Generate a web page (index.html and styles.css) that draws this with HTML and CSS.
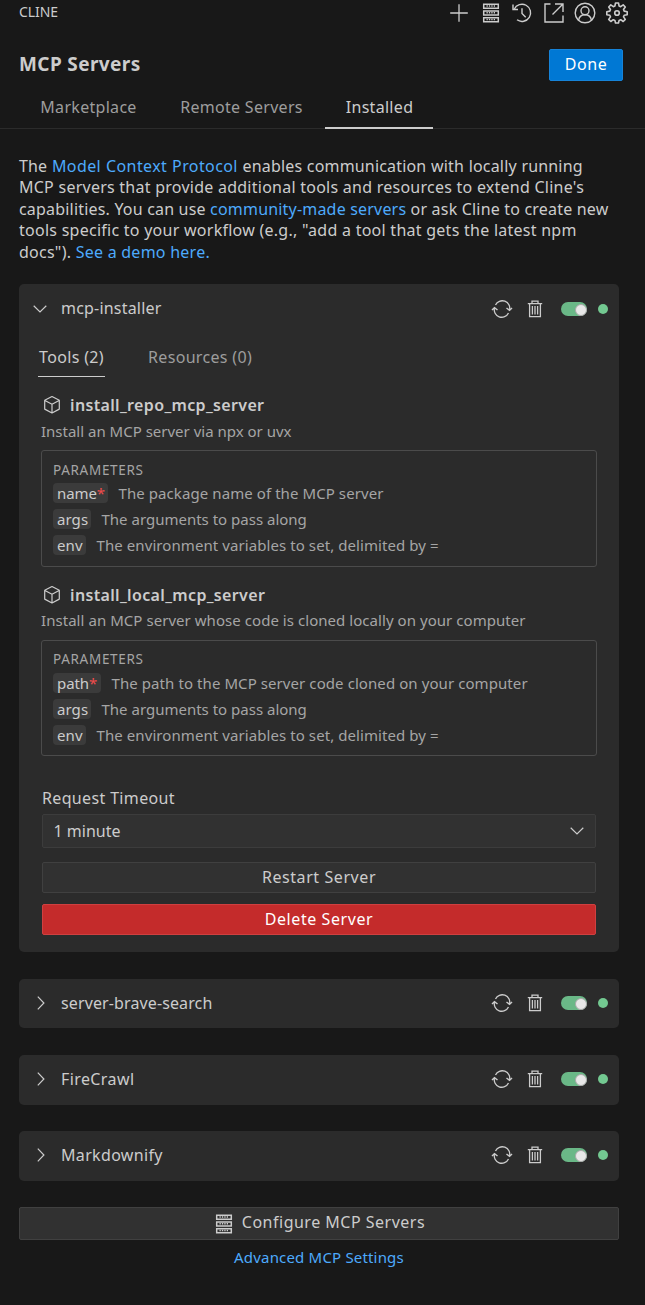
FILE: index.html
```html
<!DOCTYPE html>
<html lang="en">
<head>
<meta charset="utf-8">
<title>Cline - MCP Servers</title>
<link rel="stylesheet" href="styles.css">
</head>
<body>
<svg class="defs" width="0" height="0" aria-hidden="true">
  <symbol id="server" viewBox="0 0 18 20"><path d="M1.7 1.2h14.6v4H1.7zM1.7 8h14.6v4H1.7zM1.7 14.800h14.6v4H1.7z" fill="none" stroke="currentColor" stroke-width="1.5"/><path d="M4.500 2.9h9M4.500 9.700h9M4.500 16.500h9" stroke="currentColor" stroke-width="1.5" stroke-dasharray="1.3 1.1"/></symbol>
  <symbol id="refresh" viewBox="0 0 22 18"><g fill="none" stroke="currentColor" stroke-width="1.3"><path d="M4.5 5A7.5 7.5 0 0 1 18.5 10.2M17.5 13A7.5 7.5 0 0 1 3.5 7.8"/><path d="M1 10l2.5-2.3 3 2.3M15.5 8l3 2.3L21 8" stroke-width="1.5"/></g></symbol>
  <symbol id="trash" viewBox="0 0 16 18"><path d="M.8 3.7h14.4M5 3.5V1.2h6v2.3M2.6 3.7v13h10.8v-13M5.4 6v8.5M8 6v8.5M10.6 6v8.5" fill="none" stroke="currentColor" stroke-width="1.3"/></symbol>
  <symbol id="cube" viewBox="0 0 18 20"><path d="M9 1.5l7.3 3.8v8.8L9 18l-7.3-3.9V5.3zM1.9 5.5L9 9.3l7.1-3.8M9 9.3v8.5" fill="none" stroke="currentColor" stroke-width="1.2" stroke-linejoin="round"/></symbol>
  <symbol id="down" viewBox="0 0 14 8"><path d="M.7.8L7 6.9 13.3.8" fill="none" stroke="currentColor" stroke-width="1.2"/></symbol>
  <symbol id="right" viewBox="0 0 8 14"><path d="M.8.7L6.9 7 .8 13.3" fill="none" stroke="currentColor" stroke-width="1.2"/></symbol>
</svg>
<header class="topbar">
  <span class="brand">CLINE</span>
  <nav class="actions">
    <svg viewBox="0 0 22 22"><path d="M11 2.2v17.6M2.2 11h17.6" fill="none" stroke="currentColor" stroke-width="1.3"/></svg>
    <svg class="rack"><use href="#server"/></svg>
    <svg viewBox="0 0 22 22"><g fill="none" stroke="currentColor" stroke-width="1.4"><path d="M3.2 7.2A8.6 8.6 0 1 1 6 17.8"/><path d="M2 2.5v5h5M11 6.2v5.3l3.7 3.7"/></g></svg>
    <svg viewBox="0 0 22 22"><path d="M7.5 2H2v18h18v-6.5M12 2h8v8M20 2L9.5 12.5" fill="none" stroke="currentColor" stroke-width="1.4"/></svg>
    <svg viewBox="0 0 22 22"><g fill="none" stroke="currentColor" stroke-width="1.4"><circle cx="11" cy="11" r="9.8"/><circle cx="11" cy="8.8" r="4"/><path d="M4.6 18.2c.6-3.4 3-5.4 6.4-5.4s5.8 2 6.4 5.4"/></g></svg>
    <svg viewBox="0 0 22 22"><g fill="none" stroke="currentColor" stroke-width="1.6" stroke-linejoin="round"><path d="M9.5 1h3l.6 3 1.6.7 2.5-1.8 2.1 2.1-1.8 2.5.7 1.6 3 .6v3l-3 .6-.7 1.6 1.8 2.5-2.1 2.1-2.5-1.8-1.6.7-.6 2.6h-3l-.6-2.6-1.6-.7-2.5 1.8-2.1-2.1 1.8-2.5-.7-1.6-3-.6v-3l3-.6.7-1.600L2.700 5l2.100-2.100 2.500 1.800L8.900 4z"/><circle cx="11" cy="11" r="2.3"/></g></svg>
  </nav>
</header>
<div class="titlebar"><h1>MCP Servers</h1><button class="done">Done</button></div>
<nav class="tabs"><span class="tab market">Marketplace</span><span class="tab remote">Remote Servers</span><span class="tab active">Installed</span></nav>
<main>
  <p class="intro">
    <span class="l1">The <a>Model Context Protocol</a> enables communication with locally running</span>
    <span class="l2">MCP servers that provide additional tools and resources to extend Cline's</span>
    <span class="l3">capabilities. You can use <a>community-made servers</a> or ask Cline to create new</span>
    <span class="l4">tools specific to your workflow (e.g., "add a tool that gets the latest npm</span>
    <span class="l5">docs"). <a>See a demo here.</a></span>
  </p>
  <section class="card open">
    <div class="row"><span class="chev"><svg class="down"><use href="#down"/></svg></span><span class="name installer">mcp-installer</span><svg class="refresh"><use href="#refresh"/></svg><svg class="trash"><use href="#trash"/></svg><span class="toggle"></span><span class="dot"></span></div>
    <div class="subtabs"><span class="sub on">Tools (2)</span><span class="sub">Resources (0)</span></div>
    <article class="tool">
      <h2><svg class="cube"><use href="#cube"/></svg><span>install_repo_mcp_server</span></h2>
      <p class="desc">Install an MCP server via npx or uvx</p>
      <div class="params"><h3>PARAMETERS</h3>
        <div class="param"><code class="w55">name<i>*</i></code><span>The package name of the MCP server</span></div>
        <div class="param"><code class="w38">args</code><span class="plain">The arguments to pass along</span></div>
        <div class="param"><code class="w33">env</code><span>The environment variables to set, delimited by =</span></div>
      </div>
    </article>
    <article class="tool second">
      <h2><svg class="cube"><use href="#cube"/></svg><span>install_local_mcp_server</span></h2>
      <p class="desc">Install an MCP server whose code is cloned locally on your computer</p>
      <div class="params"><h3>PARAMETERS</h3>
        <div class="param"><code class="w48">path<i>*</i></code><span>The path to the MCP server code cloned on your computer</span></div>
        <div class="param"><code class="w38">args</code><span class="plain">The arguments to pass along</span></div>
        <div class="param"><code class="w33">env</code><span>The environment variables to set, delimited by =</span></div>
      </div>
    </article>
    <div class="controls">
      <label>Request Timeout</label>
      <div class="select"><span>1 minute</span><svg class="down"><use href="#down"/></svg></div>
      <button class="wide restart">Restart Server</button>
      <button class="wide delete">Delete Server</button>
    </div>
  </section>
  <section class="card c1"><div class="row"><span class="chev"><svg class="right"><use href="#right"/></svg></span><span class="name brave">server-brave-search</span><svg class="refresh"><use href="#refresh"/></svg><svg class="trash"><use href="#trash"/></svg><span class="toggle"></span><span class="dot"></span></div></section>
  <section class="card c2"><div class="row"><span class="chev"><svg class="right"><use href="#right"/></svg></span><span class="name crawl">FireCrawl</span><svg class="refresh"><use href="#refresh"/></svg><svg class="trash"><use href="#trash"/></svg><span class="toggle"></span><span class="dot"></span></div></section>
  <section class="card c2"><div class="row"><span class="chev"><svg class="right"><use href="#right"/></svg></span><span class="name mark">Markdownify</span><svg class="refresh"><use href="#refresh"/></svg><svg class="trash"><use href="#trash"/></svg><span class="toggle"></span><span class="dot"></span></div></section>
  <button class="configure"><svg class="rack"><use href="#server"/></svg><span>Configure MCP Servers</span></button>
  <div class="advanced"><a>Advanced MCP Settings</a></div>
</main>
</body>
</html>
```
FILE: styles.css
```css
* { box-sizing: border-box; }
body { margin: 0; height: 1305px; background: #181818; color: #ccc; font: 16px/22px "Noto Sans", sans-serif; overflow: hidden; }
h1, h2, h3, p { margin: 0; }
svg { display: block; flex: none; }
.defs { position: absolute; }
button { font: inherit; color: inherit; padding: 0; border-radius: 2px; }
a { color: #4daafc; }
.topbar { height: 25px; padding: 0 17px 0 19px; display: flex; align-items: center; justify-content: space-between; }
.brand { font-size: 14px; letter-spacing: -.1px; padding-bottom: 1px; }
.actions { display: flex; gap: 9.7px; }
.actions svg { width: 22px; height: 22px; }
.actions .rack { padding: 1px 1px 1px 3px; }
.titlebar { height: 61px; padding: 24px 22px 0 19px; display: flex; justify-content: space-between; }
h1 { font-size: 19px; line-height: 31px; letter-spacing: .38px; }
.done { width: 74px; height: 32px; background: #0078d4; border: 1px solid #1683d8; color: #fff; letter-spacing: .6px; line-height: 28px; padding-bottom: 2px; }
.tabs { height: 43px; padding-left: 19px; border-bottom: 1px solid #2b2b2b; display: flex; }
.tab { width: 138px; height: 43px; line-height: 42px; text-align: center; color: #9d9d9d; letter-spacing: .3px; padding-left: 1px; }
.tab.remote { width: 168px; }
.tab.active { width: 108px; color: #ccc; border-bottom: 2px solid #ccc; }
main { padding: 27px 26px 0 19px; }
.intro { height: 128px; line-height: 21.4px; white-space: nowrap; letter-spacing: .25px; }
.intro span { display: block; }
.intro .l1 { letter-spacing: .17px; word-spacing: .3px; }
.intro .l1 a { letter-spacing: .4px; }
.intro .l3 { letter-spacing: .19px; }
.intro .l4 { letter-spacing: .26px; }
.card { background: #2b2b2b; border-radius: 5px; }
.open { height: 668px; }
.row { height: 49px; display: flex; align-items: center; padding: 0 11px 0 14px; }
.c1 .row, .c2 .row { height: 48px; }
.chev { width: 14px; margin-right: 14px; display: flex; justify-content: center; }
.down { width: 14px; height: 8px; }
.right { width: 8px; height: 14px; margin-left: 2px; }
.name { flex: 1; padding-bottom: 1px; }
.installer { letter-spacing: .2px; }
.brave { letter-spacing: .12px; }
.crawl { letter-spacing: .4px; }
.mark { letter-spacing: .33px; }
.refresh { width: 22px; height: 18px; margin-right: 14px; }
.trash { width: 16px; height: 18px; margin-right: 18px; }
.toggle { width: 26px; height: 14px; border-radius: 7px; background: #6ab887; display: flex; justify-content: flex-end; padding: 2px 0; margin-right: 11px; }
.toggle::after { content: ""; width: 10px; height: 10px; border-radius: 50%; background: #e8e8e8; border: 1px solid #aaa; }
.dot { width: 10px; height: 10px; border-radius: 50%; background: #73c991; }
.subtabs { padding: 9px 0 0 19px; display: flex; gap: 43px; }
.sub { height: 35px; line-height: 31px; color: #9d9d9d; letter-spacing: .33px; }
.sub.on { color: #ccc; border-bottom: 1px solid #ccc; width: 67px; padding-left: 1px; letter-spacing: .35px; }
.tool { padding: 16px 22px 0; height: 190px; }
h2 { height: 23px; display: flex; align-items: center; gap: 9px; padding-left: 2px; font-size: 16px; font-weight: 600; letter-spacing: .35px; }
.cube { width: 18px; height: 20px; }
.desc { font-size: 15px; line-height: 30px; color: #a5a5a5; height: 34px; white-space: nowrap; }
.second .desc { letter-spacing: .05px; line-height: 29px; }
.params { height: 117px; border: 1px solid #4b4b4b; border-radius: 3px; padding: 8px 11px; }
h3 { font-size: 13.5px; font-weight: 400; line-height: 23px; color: #a5a5a5; margin-bottom: 1px; letter-spacing: .7px; }
.second h3 { line-height: 21px; margin-bottom: 3px; }
.param { display: flex; align-items: center; height: 20px; margin-bottom: 6px; gap: 10.5px; font-size: 15px; color: #a5a5a5; white-space: nowrap; letter-spacing: .08px; }
.plain { letter-spacing: 0; }
code { font: inherit; line-height: 20px; background: #3b3b3b; color: #ccc; border-radius: 4px; padding: 0 4px; }
code i { color: #f14c4c; font-style: normal; }
.w55 { width: 55px; } .w48 { width: 48px; } .w38 { width: 38px; } .w33 { width: 33px; }
.w55, .w48 { letter-spacing: -.1px; }
.second .params { height: 116px; }
.controls { padding: 29px 23px 0; }
.controls label { display: block; line-height: 24px; letter-spacing: .35px; }
.select { height: 34px; margin-top: 4px; border: 1px solid #3c3c3c; border-radius: 2px; background: #313131; padding: 0 11px 0 10.5px; display: flex; align-items: center; justify-content: space-between; }
.wide { display: block; width: 100%; height: 31px; background: #313131; border: 1px solid #404040; margin-top: 14px; line-height: 27px; letter-spacing: .58px; }
.delete { background: #c42b2b; border-color: #cf4040; color: #fff; margin-top: 11px; }
.c1 { margin-top: 27px; height: 49px; }
.c2 { margin-top: 27px; height: 50px; }
.c2 + .c2 { margin-top: 26px; }
.configure { width: 600px; height: 33px; margin-top: 26px; background: #313131; border: 1px solid #404040; display: flex; align-items: center; justify-content: center; gap: 9px; padding-left: 2px; letter-spacing: .5px; }
.configure span { padding-bottom: 3px; }
.rack { width: 18px; height: 20px; }
.advanced { text-align: center; font-size: 15px; line-height: 35px; letter-spacing: .18px; }
```
